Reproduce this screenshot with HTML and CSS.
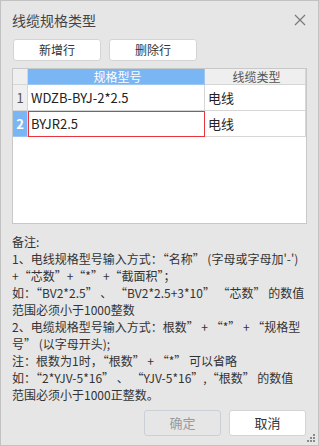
FILE: index.html
```html
<!DOCTYPE html>
<html lang="zh-CN">
<head>
    <meta charset="UTF-8">
    <title>线缆规格类型</title>
    <link rel="stylesheet" href="styles.css">
</head>
<body>

<div class="dialog">
    <div class="titlebar">
        <span class="title">线缆规格类型</span>
        <svg class="close" width="12" height="12" viewBox="0 0 12 12">
            <path d="M1 1 L11 11 M11 1 L1 11" stroke="#7a7a7a" stroke-width="1.2" fill="none"/>
        </svg>
    </div>

    <div class="toolbar">
        <button class="btn">新增行</button>
        <button class="btn">删除行</button>
    </div>

    <div class="grid">
        <table>
            <thead>
                <tr>
                    <th class="num"></th>
                    <th class="col-spec active">规格型号</th>
                    <th class="col-type">线缆类型</th>
                </tr>
            </thead>
            <tbody>
                <tr>
                    <td class="num">1</td>
                    <td>WDZB-BYJ-2*2.5</td>
                    <td>电线</td>
                </tr>
                <tr>
                    <td class="num active">2</td>
                    <td class="editing">BYJR2.5</td>
                    <td>电线</td>
                </tr>
            </tbody>
        </table>
    </div>

    <div class="notes">
        备注:<br>
        1、电线规格型号输入方式：“名称” (字母或字母加'-')<br>
        +“芯数”+“*”+“截面积”；<br>
        如：“BV2*2.5” 、 “BV2*2.5+3*10” “芯数” 的数值<br>
        范围必须小于1000整数<br>
        2、电缆规格型号输入方式：根数” + “*” + “规格型<br>
        号” (以字母开头);<br>
        注：根数为1时，“根数” + “*” 可以省略<br>
        如：“2*YJV-5*16” 、 “YJV-5*16”,“根数” 的数值<br>
        范围必须小于1000正整数。
    </div>

    <div class="footer">
        <button class="btn btn-wide" disabled>确定</button>
        <button class="btn btn-wide">取消</button>
    </div>

    <svg class="grip" width="8" height="8" viewBox="0 0 8 8">
        <rect x="6" y="0" width="2" height="2" fill="#8a8a8a"/>
        <rect x="3" y="3" width="2" height="2" fill="#8a8a8a"/>
        <rect x="6" y="3" width="2" height="2" fill="#8a8a8a"/>
        <rect x="0" y="6" width="2" height="2" fill="#8a8a8a"/>
        <rect x="3" y="6" width="2" height="2" fill="#8a8a8a"/>
        <rect x="6" y="6" width="2" height="2" fill="#8a8a8a"/>
    </svg>
</div>

</body>
</html>
```

FILE: styles.css
```css
html, body {
    margin: 0;
    padding: 0;
}
body {
    font-family: "Noto Sans CJK SC", "Noto Sans", sans-serif;
    color: #333;
}
.dialog {
    position: relative;
    box-sizing: border-box;
    width: 319px;
    height: 446px;
    background: #e6e6e6;
    border: 1px solid #c2c2c2;
    padding: 0 11px;
}
.titlebar {
    display: flex;
    justify-content: space-between;
    align-items: center;
    height: 38px;
}
.title {
    font-size: 14px;
    color: #444;
    margin-top: -1px;
}
.close {
    margin-right: 1px;
}
.toolbar {
    display: flex;
    gap: 8px;
    padding-left: 1px;
}
.btn {
    font-family: inherit;
    font-size: 12px;
    color: #333;
    width: 88px;
    height: 22px;
    padding: 0;
    background: #fff;
    border: 1px solid #d4d4d4;
    border-radius: 3px;
    line-height: 18px;
}
.grid {
    margin-top: 7px;
    height: 156px;
    background: #fff;
    border: 1px solid #c8c8c8;
    box-sizing: border-box;
}
table {
    border-collapse: collapse;
    width: 293px;
    font-size: 12px;
}
th, td {
    border: 1px solid #d6d6d6;
    padding: 0 0 0 3px;
    text-align: left;
    white-space: nowrap;
}
tr:first-child th {
    border-top: none;
}
th:first-child, td:first-child {
    border-left: none;
}
th {
    height: 15px;
    line-height: 15px;
    font-weight: normal;
    text-align: center;
    background: #efefef;
    color: #555;
}
td {
    height: 25px;
    font-size: 13px;
    color: #222;
}
.num {
    width: 14px;
    padding: 0;
    text-align: center;
    background: #efefef;
    color: #555;
}
.col-spec {
    width: 173px;
}
.active {
    background: #7ab6f4;
    color: #fff;
    font-weight: bold;
}
th.active {
    font-weight: normal;
    border-color: #9cc7f2;
}
td.active {
    border-bottom-color: #9cc7f2;
}
.editing {
    outline: 1px solid #e8343a;
    outline-offset: -1px;
}
.notes {
    margin-top: 9px;
    font-size: 12px;
    line-height: 17px;
    color: #333;
    white-space: nowrap;
}
.footer {
    display: flex;
    justify-content: flex-end;
    gap: 8px;
    margin-top: 7px;
    padding-right: 1px;
}
.btn-wide {
    width: 77px;
    height: 26px;
    font-size: 13px;
}
.btn:disabled {
    background: #e6e6e6;
    border-color: #c9d0d8;
    color: #9a9a9a;
}
.grip {
    position: absolute;
    right: 3px;
    bottom: 3px;
}
```
